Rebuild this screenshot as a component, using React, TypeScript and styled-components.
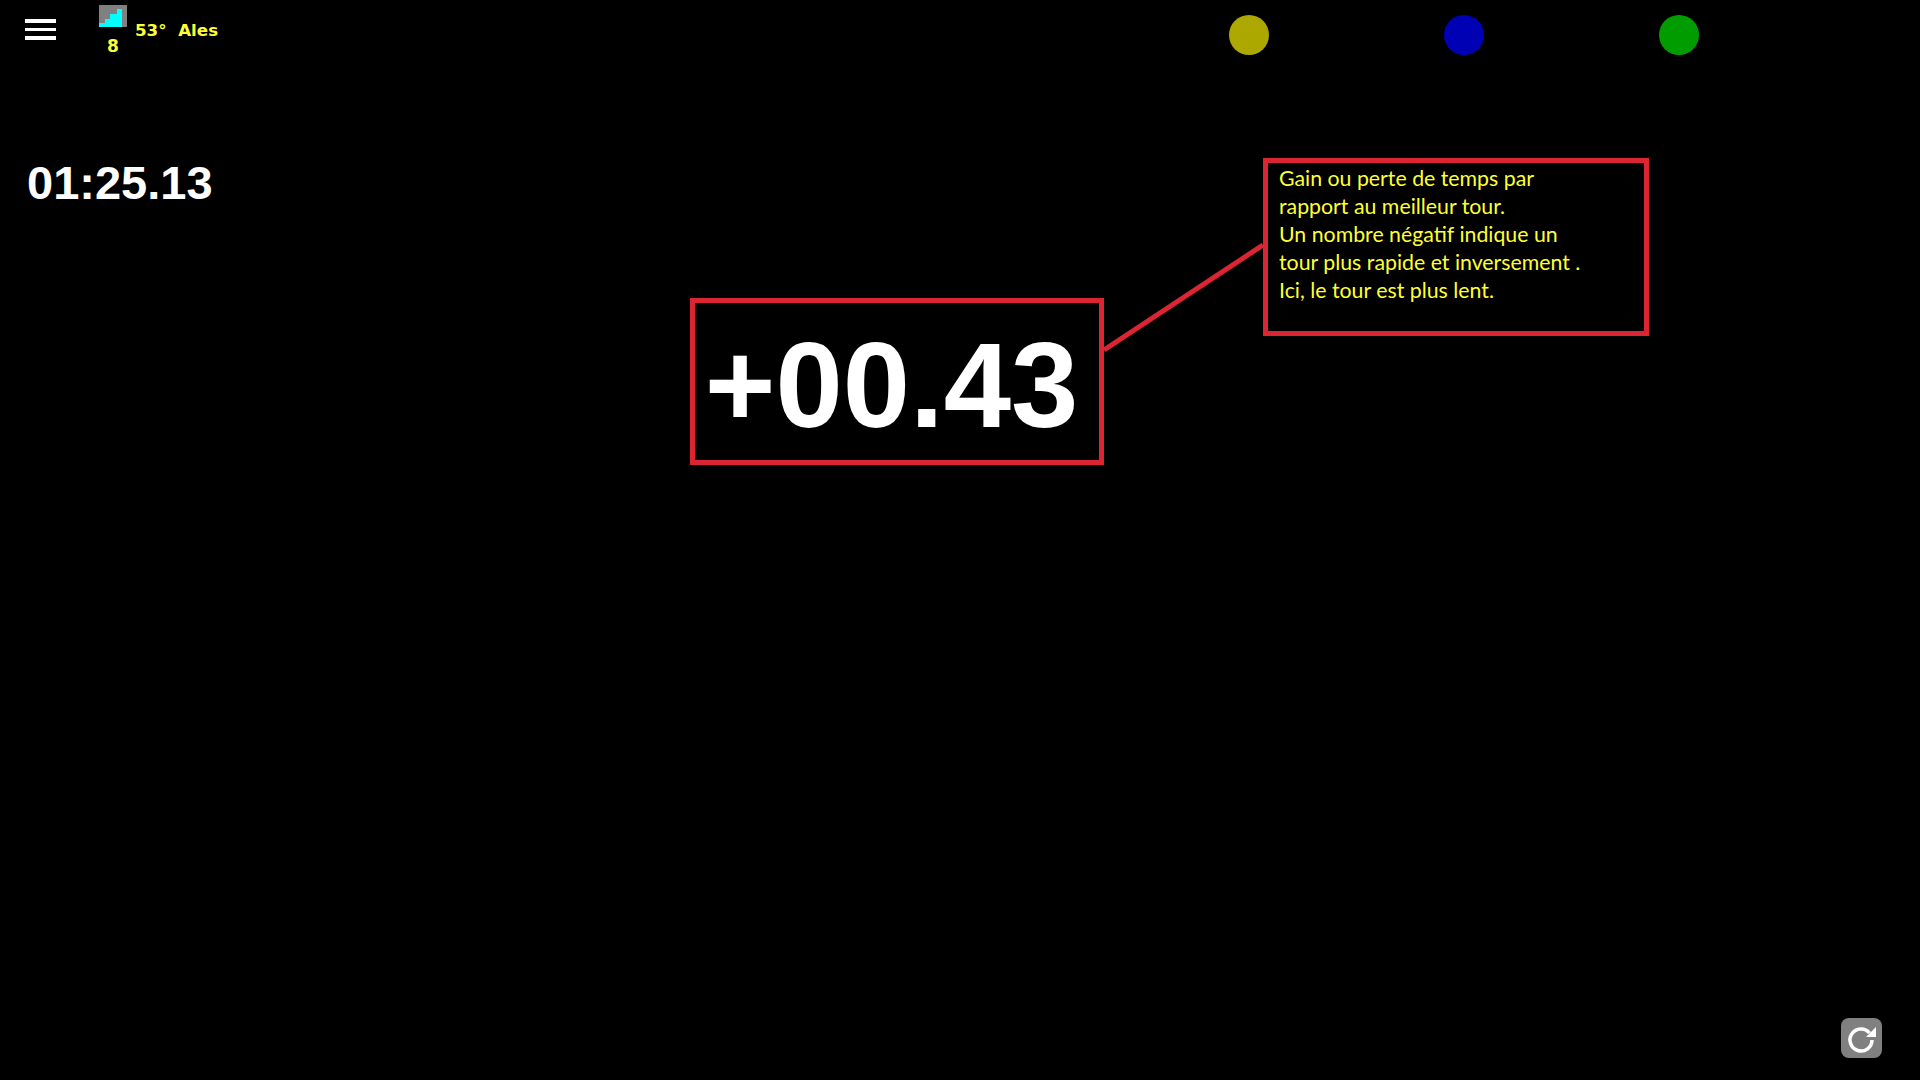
import { createGlobalStyle, styled } from "styled-components";

const GlobalStyle = createGlobalStyle`
  html, body {
    margin: 0;
    padding: 0;
    background-color: #000;
    overflow: hidden;
  }
`;

const red = "#dc2533";
const yellow = "#ffff33";

const Page = styled.div`
  width: 1920px;
  height: 1080px;
  display: flex;
  flex-direction: column;
  background-color: #000;
`;

const TopBar = styled.header`
  height: 60px;
  display: flex;
  align-items: flex-start;
  flex-shrink: 0;
`;

const MenuBtn = styled.div`
  width: 31px;
  margin: 19px 0 0 25px;
  display: flex;
  flex-direction: column;
  gap: 5px;
`;

const MenuBar = styled.span`
  height: 3.5px;
  background-color: #fff;
`;

const Signal = styled.div`
  width: 28px;
  margin: 5px 0 0 43px;
  display: flex;
  flex-direction: column;
  align-items: center;
`;

const SignalCount = styled.span`
  font-family: "DejaVu Sans", sans-serif;
  font-weight: 700;
  font-size: 17px;
  line-height: 20px;
  margin-top: 9px;
  color: ${yellow};
`;

const Weather = styled.span`
  margin: 19px 0 0 8px;
  width: 1094px;
  font-family: "DejaVu Sans", sans-serif;
  font-weight: 700;
  font-size: 16.7px;
  line-height: 22px;
  white-space: pre;
  color: ${yellow};
`;

const Dots = styled.div`
  display: flex;
  gap: 175px;
  margin-top: 15px;
`;

const Dot = styled.span<{ $color: string }>`
  width: 40px;
  height: 40px;
  border-radius: 50%;
  background-color: ${(props) => props.$color};
`;

const Content = styled.main`
  margin-top: 98px;
  padding-left: 27px;
  display: flex;
  align-items: flex-start;
`;

const LapTime = styled.div`
  width: 663px;
  margin-top: -2px;
  font-family: "Liberation Sans", Arial, sans-serif;
  font-weight: 700;
  font-size: 47px;
  line-height: 54px;
  color: #fff;
`;

const DeltaBox = styled.div`
  width: 414px;
  height: 167px;
  margin-top: 140px;
  box-sizing: border-box;
  border: 5px solid ${red};
  padding: 8px 11px 0 0;
  display: flex;
  align-items: center;
  justify-content: center;
  font-family: "Liberation Sans", Arial, sans-serif;
  font-weight: 700;
  font-size: 121px;
  line-height: 1;
  color: #fff;
`;

const Connector = styled.svg`
  width: 159px;
  height: 110px;
  margin-top: 85px;
  flex-shrink: 0;
`;

const Note = styled.div`
  width: 386px;
  height: 178px;
  box-sizing: border-box;
  border: 5px solid ${red};
  padding: 1px 0 0 11px;
  font-family: Lato, "Open Sans", sans-serif;
  font-size: 21.3px;
  line-height: 28px;
  color: ${yellow};
`;

const NoteLine = styled.div`
  white-space: pre;
`;

const Footer = styled.footer`
  margin-top: auto;
  padding: 0 38px 22px 0;
  display: flex;
  justify-content: flex-end;
`;

const RefreshBtn = styled.div`
  width: 41px;
  height: 40px;
  border-radius: 8px;
  background-color: #808080;
`;

const noteLines = [
  "Gain ou perte de temps par",
  "rapport au meilleur tour.",
  "Un nombre négatif indique un",
  "tour plus rapide et inversement .",
  "Ici, le tour est plus lent.",
];

function App() {
  return (
    <Page>
      <GlobalStyle />
      <TopBar>
        <MenuBtn>
          <MenuBar />
          <MenuBar />
          <MenuBar />
        </MenuBtn>
        <Signal>
          <svg width="28" height="22" viewBox="0 0 28 22">
            <rect width="28" height="22" fill="#808080" />
            <path
              d="M0 22V18H6V14H11V9H18V4H23V22Z"
              fill="#00ffff"
            />
          </svg>
          <SignalCount>8</SignalCount>
        </Signal>
        <Weather>{"53°  Ales"}</Weather>
        <Dots>
          <Dot $color="#aca800" />
          <Dot $color="#0000b4" />
          <Dot $color="#009c00" />
        </Dots>
      </TopBar>
      <Content>
        <LapTime>01:25.13</LapTime>
        <DeltaBox>+00.43</DeltaBox>
        <Connector viewBox="0 0 159 110">
          <line x1="0" y1="107" x2="159" y2="2" stroke={red} strokeWidth="5" />
        </Connector>
        <Note>
          {noteLines.map((line) => (
            <NoteLine key={line}>{line}</NoteLine>
          ))}
        </Note>
      </Content>
      <Footer>
        <RefreshBtn>
          <svg width="41" height="40" viewBox="0 0 41 40">
            <path
              d="M28.5 15A11 11 0 1 0 31 22"
              fill="none"
              stroke="#fff"
              strokeWidth="3.5"
            />
            <path d="M35 9V19H25Z" fill="#fff" />
          </svg>
        </RefreshBtn>
      </Footer>
    </Page>
  );
}

export default App;
